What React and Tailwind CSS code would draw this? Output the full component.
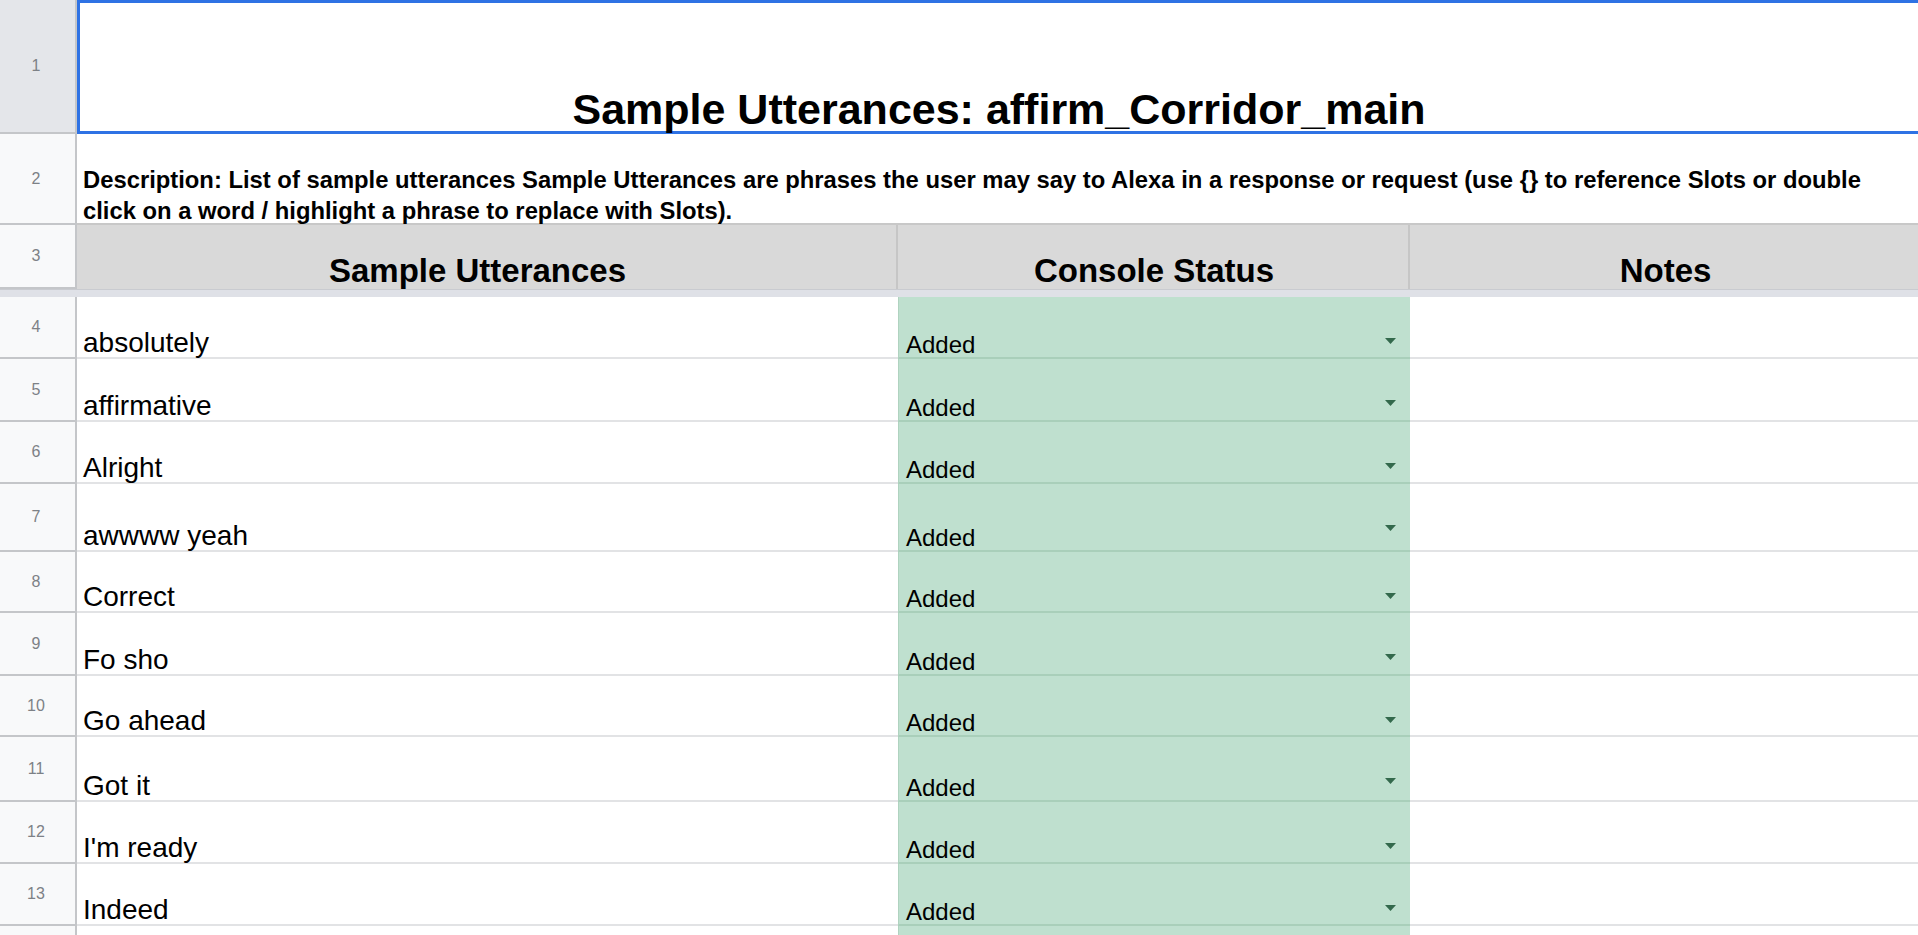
const rows = [
  { n: 4, text: "absolutely", h: "h-[62px]" },
  { n: 5, text: "affirmative", h: "h-[63px]" },
  { n: 6, text: "Alright", h: "h-[62px]" },
  { n: 7, text: "awwww yeah", h: "h-[68px]" },
  { n: 8, text: "Correct", h: "h-[61px]" },
  { n: 9, text: "Fo sho", h: "h-[63px]" },
  { n: 10, text: "Go ahead", h: "h-[61px]" },
  { n: 11, text: "Got it", h: "h-[65px]" },
  { n: 12, text: "I'm ready", h: "h-[62px]" },
  { n: 13, text: "Indeed", h: "h-[62px]" },
];

function RowNum({ n, className = "" }) {
  return (
    <div
      className={`w-[77px] shrink-0 flex items-center justify-center pr-[3px] border-r-2 border-r-[#c4c6c9] border-b-2 border-b-[#c4c6c9] text-[16px] text-[#7d8186] ${className}`}
    >
      {n}
    </div>
  );
}

function Caret() {
  return (
    <svg width="11" height="6" viewBox="0 0 11 6" className="absolute right-[14px] top-[41px]">
      <path d="M0 0 L11 0 L5.5 6 Z" fill="#33694c" />
    </svg>
  );
}

export default function App() {
  return (
    <div className="w-[1918px] h-[935px] overflow-hidden bg-white font-['Liberation_Sans',Arial,sans-serif] text-black">
      {/* row 1 - title */}
      <div className="flex h-[134px]">
        <RowNum n={1} className="bg-[#e4e6ea] border-b-0" />
        <div className="flex-1 flex items-end justify-center border-t-[3px] border-b-[3px] border-l-[3px] border-[#2e72e4]">
          <span className="text-[43px] font-bold leading-none whitespace-nowrap">
            Sample Utterances: affirm_Corridor_main
          </span>
        </div>
      </div>

      {/* row 2 - description */}
      <div className="flex h-[91px]">
        <RowNum n={2} className="bg-[#f8f9fa]" />
        <div className="flex-1 flex items-end pl-[6px] border-b-2 border-b-[#c8c8c8]">
          <p className="text-[23.8px] font-bold leading-[31px] -mb-[3px]">
            <span className="whitespace-nowrap">
              Description: List of sample utterances Sample Utterances are phrases the user may say to Alexa in a response or request (use {"{}"} to reference Slots or double
            </span>
            <br />
            <span className="whitespace-nowrap">click on a word / highlight a phrase to replace with Slots).</span>
          </p>
        </div>
      </div>

      {/* row 3 - headers */}
      <div className="flex h-[64px]">
        <RowNum n={3} className="bg-[#f8f9fa] border-b-0" />
        <div className="w-[821px] shrink-0 bg-[#d9d9d9] border-r-2 border-r-[#c6c6c6] flex items-end justify-center pb-[2px] pr-[18px]">
          <span className="text-[33px] font-bold leading-none">Sample Utterances</span>
        </div>
        <div className="w-[512px] shrink-0 bg-[#d9d9d9] border-r-2 border-r-[#c6c6c6] flex items-end justify-center pb-[2px] pl-[2px]">
          <span className="text-[33px] font-bold leading-none">Console Status</span>
        </div>
        <div className="flex-1 bg-[#d9d9d9] flex items-end justify-center pb-[2px] pl-[3px]">
          <span className="text-[33px] font-bold leading-none">Notes</span>
        </div>
      </div>

      {/* frozen separator */}
      <div className="h-[8px] bg-[#dfe1e7] border-t border-t-[#c9cbd0]" />

      {/* data rows */}
      {rows.map((r) => (
        <div key={r.n} className={`flex ${r.h}`}>
          <RowNum n={r.n} className="bg-[#f8f9fa]" />
          <div className="w-[821px] shrink-0 flex items-end pl-[6px] border-b-2 border-b-[#e2e3e5]">
            <span className="text-[28px] leading-none whitespace-nowrap">{r.text}</span>
          </div>
          <div className="relative w-[512px] shrink-0 bg-[#bfe0cf] flex items-end pl-[7px] border-b-2 border-b-[#a9cfba] border-l border-l-[#b0d3c0]">
            <span className="text-[24px] leading-none">Added</span>
            <Caret />
          </div>
          <div className="flex-1 border-b-2 border-b-[#e2e3e5]" />
        </div>
      ))}

      {/* row 14, cut off by the window */}
      <div className="flex h-[62px]">
        <div className="w-[77px] shrink-0 bg-[#f8f9fa] border-r-2 border-r-[#c4c6c9]" />
        <div className="w-[821px] shrink-0" />
        <div className="w-[512px] shrink-0 bg-[#bfe0cf] border-l border-l-[#b0d3c0]" />
        <div className="flex-1" />
      </div>
    </div>
  );
}
